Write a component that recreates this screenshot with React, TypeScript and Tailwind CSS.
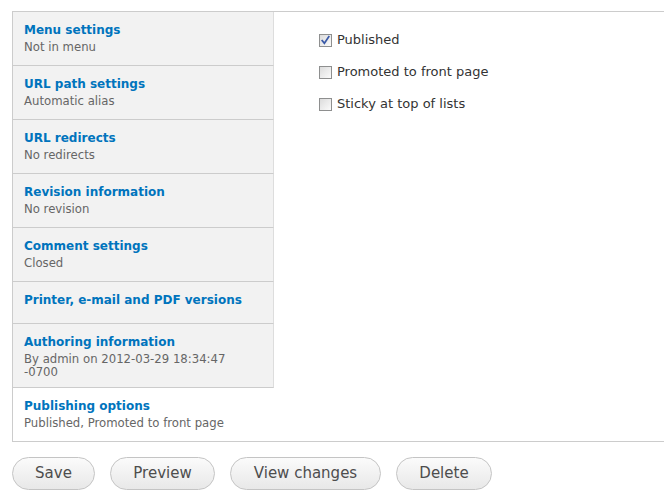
import React from "react";

const tabs = [
  { title: "Menu settings", summary: ["Not in menu"] },
  { title: "URL path settings", summary: ["Automatic alias"] },
  { title: "URL redirects", summary: ["No redirects"] },
  { title: "Revision information", summary: ["No revision"] },
  { title: "Comment settings", summary: ["Closed"] },
  { title: "Printer, e-mail and PDF versions", summary: [] },
  { title: "Authoring information", summary: ["By admin on 2012-03-29 18:34:47", "-0700"] },
  { title: "Publishing options", summary: ["Published, Promoted to front page"], selected: true },
];

function Checkbox({ checked }: { checked?: boolean }) {
  return (
    <span className="relative inline-block w-[13px] h-[13px] border border-[#8e8f8f] bg-gradient-to-br from-[#dcdcdc] to-[#fbfbfb] shrink-0">
      {checked && (
        <svg viewBox="0 0 11 11" className="absolute left-0 top-0 w-[11px] h-[11px]">
          <path d="M2.2 5.6 L4.4 8.3 L8.8 1.8" fill="none" stroke="#3b5aa8" strokeWidth="1.7" strokeLinecap="square" />
        </svg>
      )}
    </span>
  );
}

export default function App() {
  return (
    <div className="w-[664px] h-[502px] bg-white overflow-hidden" style={{ fontFamily: '"DejaVu Sans", Verdana, sans-serif' }}>
      <div className="ml-[12px] mt-[11px] w-[670px] border border-[#cccccc] flex">
        <div className="w-[261px] flex flex-col shrink-0">
          {tabs.map((t, i) => (
            <div
              key={i}
              className={
                (t.selected ? "bg-white border-r border-r-white " : "bg-[#f2f2f2] border-r border-r-[#dddddd] ") +
                (i < tabs.length - 1 ? "border-b border-b-[#cccccc] " : "") +
                "pl-[11px] pt-[9px] " +
                (t.summary.length === 0 ? "h-[42px]" : t.summary.length > 1 ? "pb-[8px]" : "pb-[12px]")
              }
            >
              <div className="text-[12px] leading-[18px] font-bold text-[#0074bd]">{t.title}</div>
              {t.summary.length > 0 && (
                <div
                  className={
                    "mt-[2px] text-[11.7px] text-[#666666] " +
                    (t.summary.length > 1 ? "leading-[13px]" : "leading-[12px]")
                  }
                >
                  {t.summary.map((s, j) => (
                    <div key={j}>{s}</div>
                  ))}
                </div>
              )}
            </div>
          ))}
        </div>
        <div className="flex-1 pl-[45px] pt-[19px]">
          <div className="flex flex-col gap-[14px]">
            <label className="flex items-center gap-[5px] h-[18px] text-[13px] text-[#333333]">
              <Checkbox checked />
              <span>Published</span>
            </label>
            <label className="flex items-center gap-[5px] h-[18px] text-[13px] text-[#333333]">
              <Checkbox />
              <span>Promoted to front page</span>
            </label>
            <label className="flex items-center gap-[5px] h-[18px] text-[13px] text-[#333333]">
              <Checkbox />
              <span>Sticky at top of lists</span>
            </label>
          </div>
        </div>
      </div>
      <div className="ml-[12px] mt-[15px] flex gap-[15px]">
        {[
          ["Save", "w-[83px]"],
          ["Preview", "w-[105px]"],
          ["View changes", "w-[151px]"],
          ["Delete", "w-[96px]"],
        ].map(([label, w]) => (
          <button
            key={label}
            className={w + " h-[33px] rounded-full border border-[#c4c4c4] bg-gradient-to-b from-[#fbfbfb] to-[#e8e8e8] text-[15px] text-[#4d4d4d] flex items-center justify-center"}
          >
            {label}
          </button>
        ))}
      </div>
    </div>
  );
}
